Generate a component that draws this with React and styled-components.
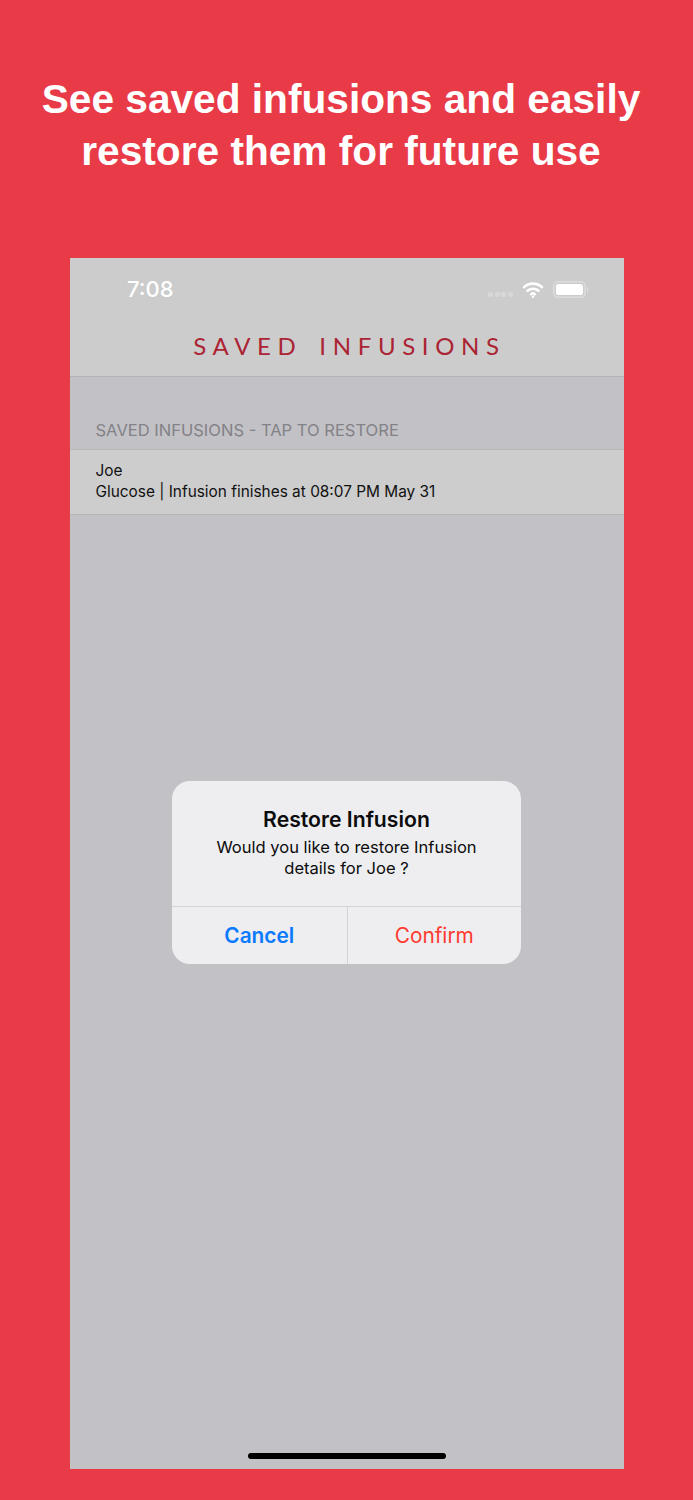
import React from "react";
import styled, { createGlobalStyle } from "styled-components";

const GlobalStyle = createGlobalStyle`
  html, body {
    margin: 0;
    padding: 0;
    background: #e93a47;
  }
`;

const Page = styled.div`
  width: 693px;
  height: 1500px;
  background: #e93a47;
  box-sizing: border-box;
  padding: 73px 69.5px 31px 69.5px;
  display: flex;
  flex-direction: column;
  overflow: hidden;
`;

const Headline = styled.h1`
  margin: 0 -19.5px 0 -30.5px;
  height: 185px;
  font-family: "Liberation Sans", Arial, sans-serif;
  font-weight: 700;
  font-size: 40.65px;
  line-height: 52px;
  color: #fff;
  text-align: center;
`;

const Phone = styled.div`
  position: relative;
  flex: 1;
  background: #c2c1c6;
  display: flex;
  flex-direction: column;
  font-family: Inter, "Liberation Sans", sans-serif;
`;

const NavBar = styled.header`
  height: 119px;
  box-sizing: border-box;
  background: #cccccc;
  border-bottom: 1px solid #b4b4b6;
  display: flex;
  flex-direction: column;
`;

const StatusBar = styled.div`
  height: 62px;
  display: flex;
  align-items: center;
  justify-content: space-between;
  padding: 0 34.5px 0 57.5px;
`;

const Clock = styled.span`
  font-size: 22px;
  font-weight: 500;
  color: #fff;
`;

const StatusIcons = styled.div`
  display: flex;
  align-items: center;
  gap: 9px;
`;

const Dots = styled.div`
  display: flex;
  gap: 1.7px;
  margin-top: 10px;
  span {
    width: 5px;
    height: 5px;
    border-radius: 40%;
    background: #d8d8d8;
  }
`;

const NavTitle = styled.div`
  padding: 11px 0 0 6px;
  text-align: center;
  font-family: Lato, "Liberation Sans", sans-serif;
  font-size: 24px;
  line-height: 30px;
  letter-spacing: 6.65px;
  word-spacing: 4px;
  color: #ab2433;
`;

const SectionLabel = styled.div`
  height: 72px;
  box-sizing: border-box;
  padding: 43px 0 0 26px;
  font-size: 16.55px;
  line-height: 20px;
  color: #828287;
`;

const Row = styled.div`
  height: 66px;
  box-sizing: border-box;
  background: #cdcdcd;
  border-top: 1px solid #b6b6b9;
  border-bottom: 1px solid #b6b6b9;
  padding: 10px 26px 0;
  font-size: 15.4px;
  line-height: 21px;
  color: #111;
`;

const Overlay = styled.div`
  position: absolute;
  inset: 0;
  display: flex;
  justify-content: center;
  align-items: flex-start;
  padding-top: 523px;
`;

const Dialog = styled.div`
  width: 349px;
  height: 183px;
  border-radius: 18px;
  background: #eeeef1;
  display: flex;
  flex-direction: column;
  overflow: hidden;
`;

const DialogBody = styled.div`
  height: 126px;
  box-sizing: border-box;
  padding-top: 24px;
  text-align: center;
  color: #0c0c0c;
  border-bottom: 1px solid #d4d4d7;
`;

const DialogTitle = styled.div`
  font-size: 21.2px;
  line-height: 28px;
  font-weight: 600;
  margin-bottom: 4px;
`;

const DialogText = styled.div`
  font-size: 16.55px;
  line-height: 21px;
`;

const DialogActions = styled.div`
  flex: 1;
  display: grid;
  grid-template-columns: 1fr 1fr;
`;

const ActionButton = styled.button`
  border: 0;
  padding: 0;
  background: transparent;
  font-family: inherit;
  font-size: 20.8px;
  font-weight: ${(p) => (p.$strong ? 600 : 400)};
  color: ${(p) => p.$color};
  & + & {
    border-left: 1px solid #d4d4d7;
  }
`;

const HomeIndicator = styled.div`
  position: absolute;
  left: 178.5px;
  bottom: 10px;
  width: 198px;
  height: 6px;
  border-radius: 3px;
  background: #000;
`;

const Wifi = () => (
  <svg width="22" height="17" viewBox="0 0 22 17" fill="none" stroke="#fff" strokeWidth="2.6" strokeLinecap="round">
    <path d="M2 6.200C7 1.400 15 1.400 20 6.200" />
    <path d="M5.600 9.800C8.600 7 13.400 7 16.400 9.800" />
    <path d="M9.200 13.200C10.200 12.300 11.800 12.300 12.800 13.200" />
    <path d="M11 15.600v.1" strokeWidth="2.400" />
  </svg>
);

const Battery = () => (
  <svg width="36" height="17" viewBox="0 0 36 17">
    <rect x="0.75" y="0.75" width="31.5" height="15.5" rx="4.5" fill="none" stroke="#dddddd" strokeWidth="1.5" />
    <rect x="3" y="3" width="27" height="11" rx="2.6" fill="#fff" />
    <path d="M34 6v5c1-.3 1.600-1.300 1.600-2.500S35 6.300 34 6z" fill="#dddddd" />
  </svg>
);

export default function App() {
  return (
    <Page>
      <GlobalStyle />
      <Headline>
        See saved infusions and easily
        <br />
        restore them for future use
      </Headline>
      <Phone>
        <NavBar>
          <StatusBar>
            <Clock>7:08</Clock>
            <StatusIcons>
              <Dots>
                <span />
                <span />
                <span />
                <span />
              </Dots>
              <Wifi />
              <Battery />
            </StatusIcons>
          </StatusBar>
          <NavTitle>SAVED INFUSIONS</NavTitle>
        </NavBar>
        <SectionLabel>SAVED INFUSIONS - TAP TO RESTORE</SectionLabel>
        <Row>
          Joe
          <br />
          Glucose | Infusion finishes at 08:07 PM May 31
        </Row>
        <Overlay>
          <Dialog>
            <DialogBody>
              <DialogTitle>Restore Infusion</DialogTitle>
              <DialogText>
                Would you like to restore Infusion
                <br />
                details for Joe ?
              </DialogText>
            </DialogBody>
            <DialogActions>
              <ActionButton $strong $color="#0a7aff">Cancel</ActionButton>
              <ActionButton $color="#ff3b30">Confirm</ActionButton>
            </DialogActions>
          </Dialog>
        </Overlay>
        <HomeIndicator />
      </Phone>
    </Page>
  );
}
